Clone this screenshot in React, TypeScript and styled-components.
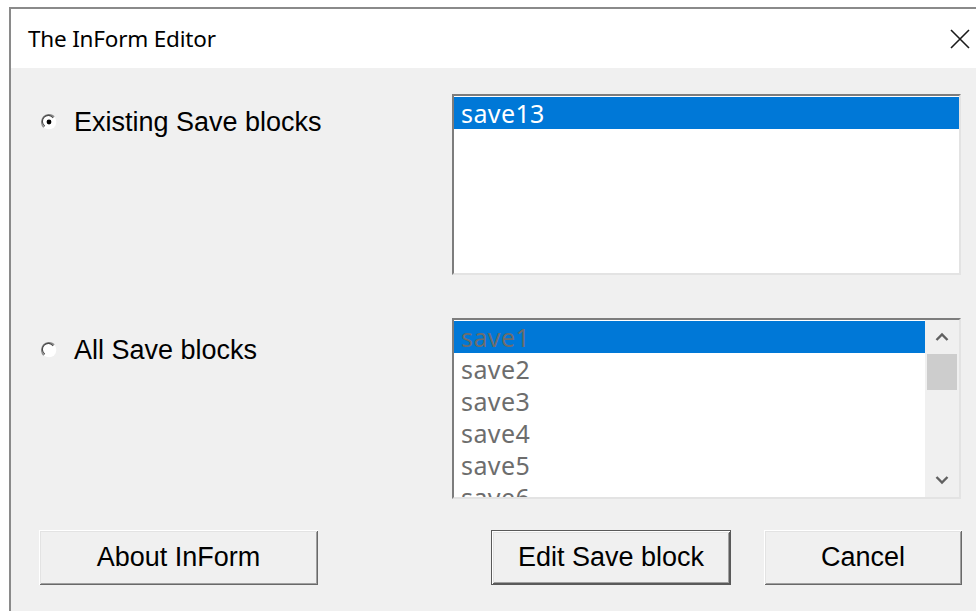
import React from "react";
import styled, { createGlobalStyle } from "styled-components";

const Global = createGlobalStyle`
  html, body {
    margin: 0;
    padding: 0;
    background: #ffffff;
    overflow: hidden;
  }
  body {
    width: 976px;
    height: 611px;
  }
`;

const Window = styled.div`
  margin: 7px 0 0 9px;
  width: 967px;
  height: 620px;
  box-sizing: border-box;
  border-top: 2px solid #8a8a8a;
  border-left: 2px solid #8a8a8a;
  background: #f0f0f0;
  display: flex;
  flex-direction: column;
`;

const TitleBar = styled.div`
  height: 59px;
  flex: none;
  background: #ffffff;
  display: flex;
  align-items: center;
  justify-content: space-between;
  padding: 0 6px 0 17px;
`;

const Title = styled.span`
  font-family: "Noto Sans", "Open Sans", sans-serif;
  font-size: 22.5px;
  letter-spacing: -0.2px;
  color: #000000;
`;

const CloseIcon = styled.svg`
  width: 20px;
  height: 20px;
  display: block;
`;

const Content = styled.div`
  padding-top: 26px;
  display: flex;
  flex-direction: column;
`;

const Section = styled.div<{ $gap?: number }>`
  display: flex;
  margin-top: ${(p) => p.$gap ?? 0}px;
`;

const OptionCell = styled.div<{ $top: number }>`
  width: 441px;
  box-sizing: border-box;
  padding: ${(p) => p.$top}px 0 0 30px;
`;

const RadioLabel = styled.label`
  display: flex;
  align-items: center;
  gap: 17px;
  font-family: "Liberation Sans", Arial, sans-serif;
  font-size: 27px;
  line-height: 30px;
  color: #000000;
`;

const RadioDot = styled.svg`
  width: 16px;
  height: 16px;
  display: block;
  flex: none;
`;

const ListBox = styled.div`
  width: 509px;
  height: 181px;
  box-sizing: border-box;
  background: #ffffff;
  border-top: 2px solid #7d7d7d;
  border-left: 2px solid #7d7d7d;
  border-right: 2px solid #e3e3e3;
  border-bottom: 2px solid #e3e3e3;
  display: flex;
  overflow: hidden;
`;

const Items = styled.div`
  flex: 1;
  padding-top: 1px;
  overflow: hidden;
`;

const Item = styled.div<{ $selected?: boolean; $dim?: boolean }>`
  height: 32px;
  line-height: 32px;
  padding-left: 7px;
  font-family: "Noto Sans", "Open Sans", sans-serif;
  font-size: 25px;
  letter-spacing: 0.4px;
  white-space: nowrap;
  overflow: hidden;
  background: ${(p) => (p.$selected ? "#0078d7" : "transparent")};
  color: ${(p) => (p.$dim ? "#6d6d6d" : p.$selected ? "#ffffff" : "#000000")};
`;

const ScrollBar = styled.div`
  width: 34px;
  flex: none;
  background: #f0f0f0;
  display: flex;
  flex-direction: column;
  align-items: center;
`;

const ArrowBtn = styled.div`
  height: 34px;
  width: 100%;
  display: flex;
  align-items: center;
  justify-content: center;
`;

const Track = styled.div`
  flex: 1;
  width: 100%;
  padding: 0 2px;
  box-sizing: border-box;
`;

const Thumb = styled.div`
  height: 36px;
  background: #cdcdcd;
`;

const ButtonRow = styled.div`
  margin-top: 31px;
  padding-left: 28px;
  display: flex;
`;

const Button = styled.button<{ $w: number; $ml?: number; $default?: boolean }>`
  width: ${(p) => p.$w}px;
  height: 55px;
  margin-left: ${(p) => p.$ml ?? 0}px;
  box-sizing: border-box;
  background: #f0f0f0;
  font-family: "Liberation Sans", Arial, sans-serif;
  font-size: 27px;
  color: #000000;
  padding: 0;
  border: none;
  box-shadow: ${(p) =>
    p.$default
      ? "inset 1px 1px 0 #5a5a5a, inset -1px -1px 0 #5a5a5a, inset 2px 2px 0 #ffffff, inset -2px -2px 0 #5a5a5a, inset 3px 3px 0 #e3e3e3, inset -3px -3px 0 #a0a0a0"
      : "inset 1px 1px 0 #ffffff, inset -1px -1px 0 #696969, inset 2px 2px 0 #e3e3e3, inset -2px -2px 0 #a0a0a0"};
`;

const Radio = ({ checked }: { checked?: boolean }) => (
  <RadioDot viewBox="0 0 16 16">
    <circle cx="8" cy="8" r="7.3" fill="#ffffff" />
    <path d="M13.2 2.8 A7.3 7.3 0 1 0 2.8 13.2" fill="none" stroke="#8a8a8a" strokeWidth="1.4" />
    <path d="M12.2 3.8 A6 6 0 1 0 3.8 12.2" fill="none" stroke="#4a4a4a" strokeWidth="1.1" />
    {checked && <circle cx="8" cy="8" r="2.4" fill="#000000" />}
  </RadioDot>
);

const Chevron = ({ up }: { up?: boolean }) => (
  <svg width="16" height="10" viewBox="0 0 16 10">
    <path
      d={up ? "M2.5 8 L8 2.5 L13.5 8" : "M2.5 2 L8 7.5 L13.5 2"}
      fill="none"
      stroke="#606060"
      strokeWidth="2.4"
    />
  </svg>
);

const allBlocks = ["save1", "save2", "save3", "save4", "save5", "save6"];

export default function App() {
  return (
    <>
      <Global />
      <Window>
        <TitleBar>
          <Title>The InForm Editor</Title>
          <CloseIcon viewBox="0 0 20 20">
            <path d="M1 1 L19 19 M19 1 L1 19" stroke="#1a1a1a" strokeWidth="1.6" />
          </CloseIcon>
        </TitleBar>
        <Content>
          <Section>
            <OptionCell $top={13}>
              <RadioLabel>
                <Radio checked />
                Existing Save blocks
              </RadioLabel>
            </OptionCell>
            <ListBox>
              <Items>
                <Item $selected>save13</Item>
              </Items>
            </ListBox>
          </Section>
          <Section $gap={43}>
            <OptionCell $top={17}>
              <RadioLabel>
                <Radio />
                All Save blocks
              </RadioLabel>
            </OptionCell>
            <ListBox>
              <Items>
                {allBlocks.map((name, i) => (
                  <Item key={name} $selected={i === 0} $dim>
                    {name}
                  </Item>
                ))}
              </Items>
              <ScrollBar>
                <ArrowBtn>
                  <Chevron up />
                </ArrowBtn>
                <Track>
                  <Thumb />
                </Track>
                <ArrowBtn>
                  <Chevron />
                </ArrowBtn>
              </ScrollBar>
            </ListBox>
          </Section>
          <ButtonRow>
            <Button $w={279}>About InForm</Button>
            <Button $w={240} $ml={173} $default>
              Edit Save block
            </Button>
            <Button $w={198} $ml={33}>
              Cancel
            </Button>
          </ButtonRow>
        </Content>
      </Window>
    </>
  );
}
